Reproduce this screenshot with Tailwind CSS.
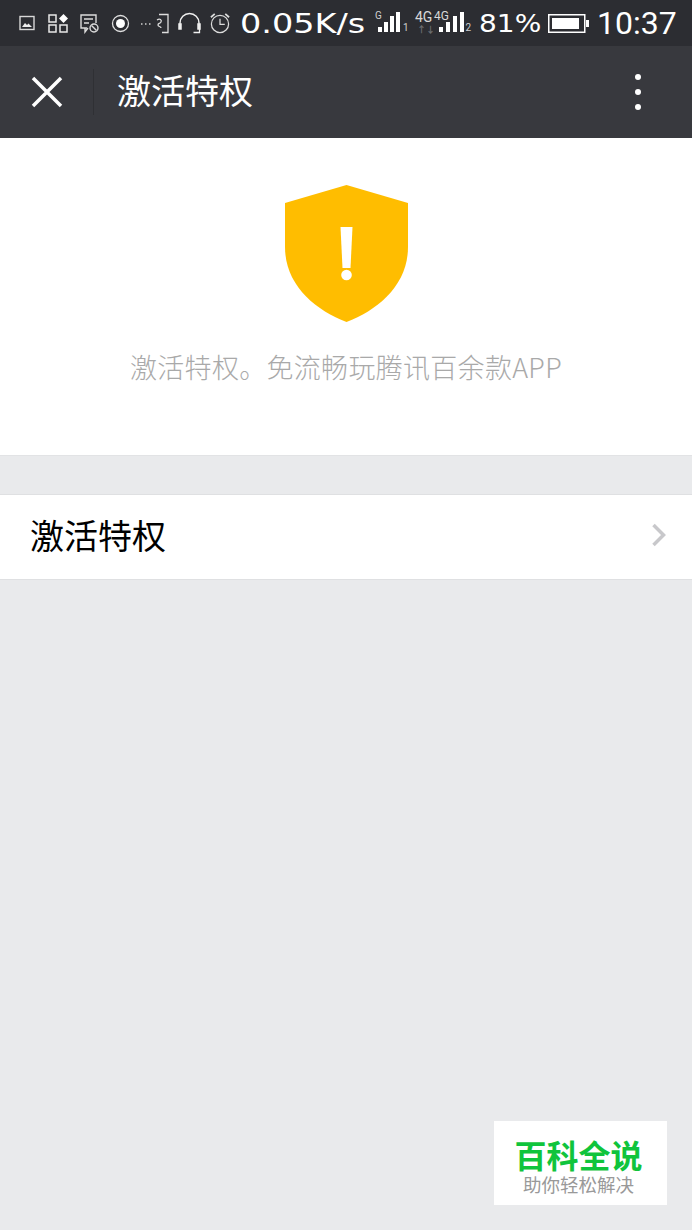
<!DOCTYPE html>
<html lang="zh-CN">
<head>
  <meta charset="UTF-8">
  <meta name="viewport" content="width=device-width, initial-scale=1.0">
  <title>激活特权</title>
  <script src="https://cdn.jsdelivr.net/npm/@tailwindcss/browser@4"></script>
</head>
<body class="bg-[#e9eaec] font-['Noto_Sans_CJK_SC',sans-serif]">
  <div class="relative w-[692px] h-[1230px] overflow-hidden">

    <!-- Status bar -->
    <div class="h-[46px] bg-[#2c2d32] flex items-center pl-[19px] text-white">
      <svg class="w-[16px] h-[16px]" viewBox="0 0 16 16" fill="none" stroke="#d8d8d8" stroke-width="1.4"><rect x="1" y="1.5" width="14" height="13"/><path d="M3 12l3-4 2 2 1.500-1.500 3.500 3.500z" fill="#eee" stroke="none"/></svg>
      <svg class="w-[21px] h-[20px] ml-[13px]" viewBox="0 0 21 20" fill="none" stroke="#e8e8e8" stroke-width="1.500"><rect x="1" y="2" width="7" height="7"/><rect x="1" y="12" width="7" height="7"/><rect x="12" y="12" width="7" height="7"/><path d="M15.500 1l4.500 4.500-4.500 4.500-4.500-4.500z" fill="#fff" stroke="none"/></svg>
      <svg class="w-[21px] h-[21px] ml-[10px]" viewBox="0 0 21 21" fill="none" stroke="#dcdcdc" stroke-width="1.400"><path d="M8 15H2V2h15v8"/><path d="M2 15v0M6 15v4l3-4M5 6h9M5 10h5"/><circle cx="15" cy="15" r="4"/><path d="M12.500 12.500l5 5"/></svg>
      <svg class="w-[19px] h-[19px] ml-[11px]" viewBox="0 0 19 19" fill="none"><circle cx="9.500" cy="9.500" r="8" stroke="#e0e0e0" stroke-width="1.300"/><circle cx="9.500" cy="9.500" r="4.500" fill="#fff"/></svg>
      <svg class="w-[30px] h-[21px] ml-[10px]" viewBox="0 0 30 21" fill="none" stroke="#dddddd" stroke-width="1.300"><path d="M1 11h1.500M5 11h1.500M9 11h1.500" stroke="#cfcfcf"/><path d="M19 1.500h9v18h-6"/><path d="M17 7c3-2 5 0 4 2s-3 1-3 3 3 1 3 3"/></svg>
      <svg class="w-[23px] h-[22px] ml-[8px]" viewBox="0 0 23 22" fill="none" stroke="#eeeeee" stroke-width="1.500"><path d="M2 17V11a9.500 9.500 0 0 1 19 0v6"/><path d="M1 12h2v5H1zM20 12h2v5h-2z" fill="#eee"/><path d="M21.500 17v3.500h-6" stroke-width="1.300"/></svg>
      <svg class="w-[22px] h-[22px] ml-[8px]" viewBox="0 0 23 22" fill="none" stroke="#dcdcdc" stroke-width="1.300"><circle cx="11.500" cy="12" r="9"/><path d="M11.500 6.500v6h5"/><path d="M2 5l4-3.500M21 5l-4-3.500" stroke-width="1.800"/></svg>
      <span class="ml-[9px] w-[135px] font-['DejaVu_Sans',sans-serif] text-[27px] leading-none whitespace-nowrap scale-x-[1.24] origin-left">0.05K/s</span>
      <!-- SIM 1 -->
      <div class="w-[34px] h-[24px] relative">
        <span class="absolute left-[0px] top-[-1px] font-['Roboto',sans-serif] text-[10px] leading-[12px] text-[#d0d0d0]">G</span>
        <div class="absolute left-[3px] bottom-[3px] flex items-end gap-[2px]">
          <i class="block w-[4px] h-[5px] bg-white"></i><i class="block w-[4px] h-[10px] bg-white"></i><i class="block w-[4px] h-[16px] bg-white"></i><i class="block w-[4px] h-[20px] bg-white"></i>
        </div>
        <span class="absolute left-[28px] bottom-[2px] font-['Roboto',sans-serif] text-[10px] leading-[10px] text-[#d0d0d0]">1</span>
      </div>
      <!-- SIM 2 -->
      <div class="ml-[6px] w-[56px] h-[24px] relative">
        <span class="absolute left-[0px] top-[-1px] font-['Roboto',sans-serif] text-[14px] leading-[14px] text-[#d8d8d8]">4G</span>
        <span class="absolute left-[19px] top-[-1px] font-['Roboto',sans-serif] text-[12px] leading-[12px] text-[#d8d8d8]">4G</span>
        <span class="absolute left-[2px] top-[14px] text-[9px] leading-[9px] font-bold text-[#6d6e70]">↑↓</span>
        <div class="absolute left-[24px] bottom-[3px] flex items-end gap-[3px]">
          <i class="block w-[4px] h-[5px] bg-white"></i><i class="block w-[4px] h-[10px] bg-white"></i><i class="block w-[4px] h-[16px] bg-white"></i><i class="block w-[4px] h-[20px] bg-white"></i>
        </div>
        <span class="absolute right-[0px] bottom-[2px] font-['Roboto',sans-serif] text-[10px] leading-[10px] text-[#d0d0d0]">2</span>
      </div>
      <span class="ml-[8px] w-[69px] font-['DejaVu_Sans',sans-serif] text-[25px] leading-none whitespace-nowrap scale-x-[1.12] origin-left">81%</span>
      <svg class="w-[42px] h-[19px]" viewBox="0 0 42 19"><rect x="0.750" y="0.750" width="36" height="17.500" fill="none" stroke="#fff" stroke-width="1.500"/><rect x="4" y="4" width="27" height="11" fill="#fff"/><rect x="38" y="6" width="3" height="7" fill="#fff"/></svg>
      <span class="ml-[7px] font-['Roboto',sans-serif] text-[32px] leading-none whitespace-nowrap">10:37</span>
    </div>

    <!-- Nav bar -->
    <div class="h-[92px] bg-[#38393e] flex items-center text-white">
      <div class="w-[93px] flex justify-center">
        <svg class="w-[32px] h-[32px]" viewBox="0 0 32 32" fill="none" stroke="#fff" stroke-width="3.500"><path d="M2 2l28 28M30 2L2 30"/></svg>
      </div>
      <div class="w-px h-[46px] bg-[#2f3034]"></div>
      <span class="ml-[23px] mb-[4px] text-[34px] leading-none font-normal">激活特权</span>
      <div class="ml-auto mr-[51px] flex flex-col gap-[9px]">
        <i class="block w-[6px] h-[6px] rounded-full bg-white"></i>
        <i class="block w-[6px] h-[6px] rounded-full bg-white"></i>
        <i class="block w-[6px] h-[6px] rounded-full bg-white"></i>
      </div>
    </div>

    <!-- Notice -->
    <section class="h-[318px] bg-white border-b border-[#e2e3e5] flex flex-col items-center pt-[47px]">
      <svg class="w-[123px] h-[137px]" viewBox="0 0 123 137">
        <path d="M61.500 0L123 18v44c0 38-30 63-61.500 75C30 125 0 100 0 62V18z" fill="#ffbd00"/>
        <path d="M55.500 42h12l-2 41h-8z" fill="#fff"/>
        <circle cx="61.500" cy="90" r="5.300" fill="#fff"/>
      </svg>
      <p class="mt-[27px] text-[27px] leading-[36px] tracking-[0.3px] font-light text-[#a9a9a9] whitespace-nowrap">激活特权。免流畅玩腾讯百余款APP</p>
    </section>

    <!-- Activate row -->
    <div class="mt-[38px] h-[86px] bg-white border-y border-[#dfe0e2] flex items-center pl-[30px] pr-[26px]">
      <span class="mb-[4px] text-[34px] leading-none font-normal text-black">激活特权</span>
      <svg class="ml-auto mb-[4px] w-[15px] h-[24px]" viewBox="0 0 15 24" fill="none" stroke="#c8c8cb" stroke-width="3.500"><path d="M2.500 2l10 10-10 10"/></svg>
    </div>

    <!-- Watermark -->
    <div class="absolute left-[494px] top-[1121px] w-[173px] h-[84px] bg-white flex flex-col items-center pt-[15px] pr-[4px]">
      <span class="text-[32px] leading-[36px] font-bold text-[#10c43c] whitespace-nowrap">百科全说</span>
      <span class="mt-[1px] text-[18.500px] leading-[22px] text-[#999999] whitespace-nowrap">助你轻松解决</span>
    </div>
  </div>
</body>
</html>
